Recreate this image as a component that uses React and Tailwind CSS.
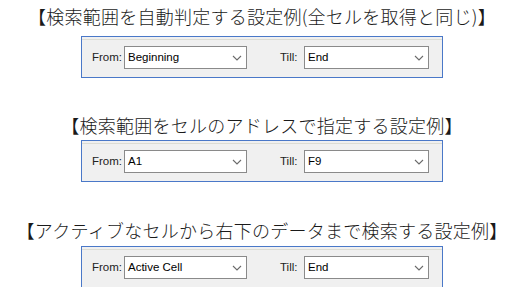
const examples = [
  { title: '【検索範囲を自動判定する設定例(全セルを取得と同じ)】', from: 'Beginning', till: 'End', gap: 'mt-0', head: 'h-[36px] pb-[4px]' },
  { title: '【検索範囲をセルのアドレスで指定する設定例】', from: 'A1', till: 'F9', gap: 'mt-[32px]', head: 'h-[30px]' },
  { title: '【アクティブなセルから右下のデータまで検索する設定例】', from: 'Active Cell', till: 'End', gap: 'mt-[32px]', head: 'h-[32px]' },
];

const Chevron = () => (
  <svg width="10" height="6" viewBox="0 0 10 6" className="shrink-0">
    <path d="M1 1 L5 5 L9 1" fill="none" stroke="#6b6b6b" strokeWidth="1.1" />
  </svg>
);

const Dropdown = ({ value, width }) => (
  <div className={`${width} h-[23px] bg-white border border-[#8a8a8a] flex items-center justify-between pl-[3px] pr-[4px]`}>
    <span className="text-[11.5px] text-black">{value}</span>
    <Chevron />
  </div>
);

const App = () => {
  return (
    <div className="w-[531px] h-[287px] bg-white overflow-hidden flex flex-col items-center pr-[7px]" style={{ fontFamily: '"Liberation Sans", Arial, sans-serif' }}>
      {examples.map((ex, i) => (
        <div key={i} className={`flex flex-col items-center ${ex.gap}`}>
          <div
            className={`${ex.head} flex items-center text-[18px] tracking-[0.25px] text-[#1a1a1a] whitespace-nowrap`}
            style={{ fontFamily: '"Noto Sans CJK JP", "Noto Sans", sans-serif', fontWeight: 300 }}
          >
            {ex.title}
          </div>
          <div className="w-[362px] h-[42px] border border-[#4a78c8] bg-[#f0f0f0] flex flex-col">
            <div className="h-[3px] border-b border-[#dcdcd4]" />
            <div className="flex-1 flex items-center pl-[10px] pr-[13px] pb-[2px]">
              <span className="text-[11.5px] text-[#222] w-[32px]">From:</span>
              <Dropdown value={ex.from} width="w-[123px]" />
              <span className="text-[11.5px] text-[#222] ml-[33px] w-[24px]">Till:</span>
              <Dropdown value={ex.till} width="w-[125px]" />
            </div>
          </div>
        </div>
      ))}
    </div>
  );
};

export default App;
